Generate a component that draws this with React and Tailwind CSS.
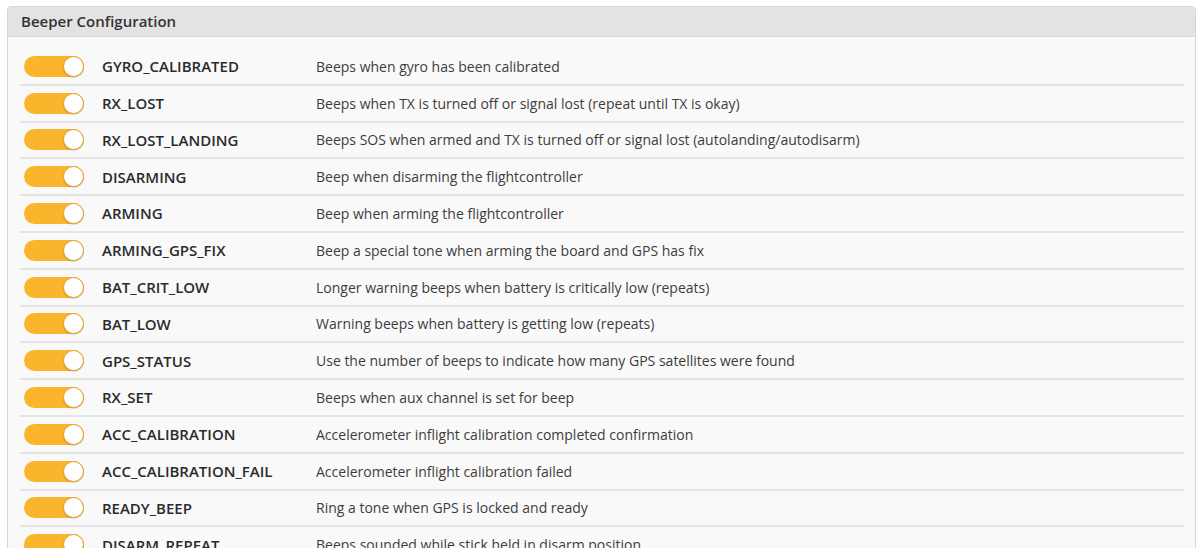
import React from "react";

const rows = [
  ["GYRO_CALIBRATED", "Beeps when gyro has been calibrated"],
  ["RX_LOST", "Beeps when TX is turned off or signal lost (repeat until TX is okay)"],
  ["RX_LOST_LANDING", "Beeps SOS when armed and TX is turned off or signal lost (autolanding/autodisarm)"],
  ["DISARMING", "Beep when disarming the flightcontroller"],
  ["ARMING", "Beep when arming the flightcontroller"],
  ["ARMING_GPS_FIX", "Beep a special tone when arming the board and GPS has fix"],
  ["BAT_CRIT_LOW", "Longer warning beeps when battery is critically low (repeats)"],
  ["BAT_LOW", "Warning beeps when battery is getting low (repeats)"],
  ["GPS_STATUS", "Use the number of beeps to indicate how many GPS satellites were found"],
  ["RX_SET", "Beeps when aux channel is set for beep"],
  ["ACC_CALIBRATION", "Accelerometer inflight calibration completed confirmation"],
  ["ACC_CALIBRATION_FAIL", "Accelerometer inflight calibration failed"],
  ["READY_BEEP", "Ring a tone when GPS is locked and ready"],
  ["DISARM_REPEAT", "Beeps sounded while stick held in disarm position"],
];

function Toggle() {
  return (
    <div className="relative w-[60px] h-[21px] rounded-full bg-[#fbb52c] shrink-0">
      <div className="absolute right-0 top-0 w-[21px] h-[21px] rounded-full bg-white border border-[#e0a12a] shadow-[0_1px_1px_rgba(0,0,0,0.15)]" />
    </div>
  );
}

export default function App() {
  return (
    <div className="w-[1200px] h-[548px] overflow-hidden bg-white pt-[6px] pl-[7px] pr-[4px]" style={{ fontFamily: '"Open Sans", sans-serif' }}>
      <div className="border border-[#d6d6d6] rounded-t-[4px] bg-[#f9f9f9] h-[600px]">
        <div className="h-[30px] bg-[#e3e3e3] border-b border-[#dcdcdc] flex items-center pl-[13px] text-[15px] font-semibold text-[#333] rounded-t-[4px]">
          Beeper Configuration
        </div>
        <div className="pt-[12px] pl-[12px] pr-[11px]">
          {rows.map(([name, desc]) => (
            <div key={name} className="h-[36.8px] border-b-2 border-[#e4e4e4] flex items-center">
              <div className="pl-[4px] w-[82px]">
                <Toggle />
              </div>
              <div className="w-[214px] text-[15px] font-semibold text-[#2b2b2b]">{name}</div>
              <div className="text-[14px] text-[#3d3d3d]">{desc}</div>
            </div>
          ))}
        </div>
      </div>
    </div>
  );
}
